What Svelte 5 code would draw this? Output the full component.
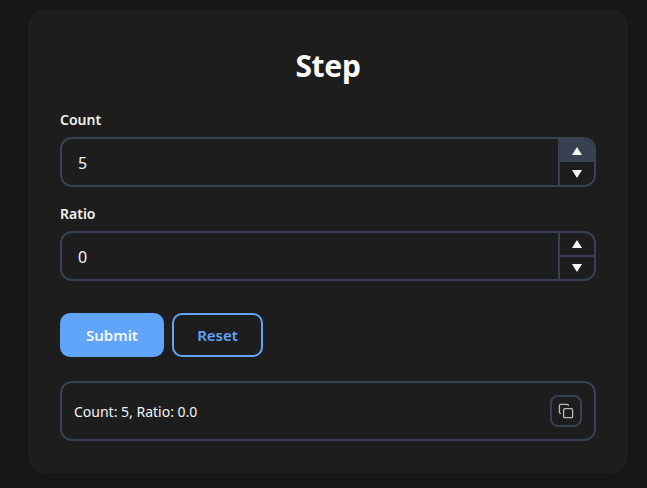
<script>
  let count = 5;
  let ratio = 0;

  const fields = [
    { label: 'Count', value: count, hot: true },
    { label: 'Ratio', value: ratio, hot: false }
  ];
</script>

<main class="page">
  <section class="card">
    <h1>Step</h1>

    {#each fields as field}
      <div class="field">
        <span class="label">{field.label}</span>
        <div class="number">
          <span class="value">{field.value}</span>
          <div class="spin">
            <button class="arrow" class:hot={field.hot} aria-label="Increment">
              <svg width="10" height="8" viewBox="0 0 10 8"><path d="M5 0 L10 8 H0 Z" /></svg>
            </button>
            <button class="arrow down" aria-label="Decrement">
              <svg width="10" height="8" viewBox="0 0 10 8"><path d="M0 0 H10 L5 8 Z" /></svg>
            </button>
          </div>
        </div>
      </div>
    {/each}

    <div class="actions">
      <button class="btn primary">Submit</button>
      <button class="btn secondary">Reset</button>
    </div>

    <div class="output">
      <span>Count: 5, Ratio: 0.0</span>
      <button class="copy" aria-label="Copy">
        <svg width="16" height="16" viewBox="0 0 16 16" fill="none" stroke="currentColor" stroke-width="1.3">
          <rect x="5.6" y="5.6" width="9" height="9" rx="1.2" />
          <path d="M3 10.4 H2.6 A1.2 1.2 0 0 1 1.4 9.2 V2.6 A1.2 1.2 0 0 1 2.6 1.4 H9.2 A1.2 1.2 0 0 1 10.4 2.6 V3" />
        </svg>
      </button>
    </div>
  </section>
</main>

<style>
  :global(body) {
    margin: 0;
    background: #161616;
  }

  .page {
    padding: 10px 19px 15px 28px;
    font-family: "Noto Sans", "Open Sans", sans-serif;
    color: #f4f4f5;
  }

  .card {
    box-sizing: border-box;
    width: 600px;
    height: 463px;
    padding: 32px;
    background: #1d1d1d;
    border-radius: 16px;
  }

  h1 {
    margin: 0 0 20px;
    height: 48px;
    line-height: 48px;
    font-size: 30px;
    font-weight: 700;
    text-align: center;
    color: #fff;
    letter-spacing: -0.3px;
  }

  .field {
    margin-bottom: 17px;
  }

  .label {
    display: block;
    height: 27px;
    line-height: 19px;
    font-size: 14px;
    font-weight: 600;
    color: #f0f0f0;
  }

  .number {
    box-sizing: border-box;
    display: flex;
    height: 50px;
    border: 2px solid #374151;
    border-radius: 12px;
    overflow: hidden;
  }

  .value {
    flex: 1;
    padding-left: 16px;
    line-height: 48px;
    font-size: 16px;
    color: #f4f4f5;
  }

  .spin {
    box-sizing: border-box;
    display: flex;
    flex-direction: column;
    width: 36px;
    border-left: 2px solid #374151;
  }

  .arrow {
    flex: 1;
    display: flex;
    align-items: center;
    justify-content: center;
    padding: 0;
    border: 0;
    background: none;
  }

  .arrow.hot {
    background: #374151;
  }

  .arrow.down {
    border-top: 2px solid #374151;
  }

  .arrow.hot + .arrow.down {
    border-top: 0;
  }

  .arrow svg {
    fill: #f8fafc;
  }

  .actions {
    display: flex;
    gap: 8px;
    margin-top: 32px;
  }

  .btn {
    box-sizing: border-box;
    height: 44px;
    border-radius: 10px;
    font-family: inherit;
    font-size: 15px;
    font-weight: 600;
  }

  .primary {
    width: 104px;
    border: 0;
    background: #60a5fa;
    color: #f4f8ff;
  }

  .secondary {
    width: 91px;
    border: 2px solid #60a5fa;
    background: none;
    color: #60a5fa;
  }

  .output {
    box-sizing: border-box;
    display: flex;
    align-items: center;
    justify-content: space-between;
    height: 60px;
    margin-top: 24px;
    padding: 0 12px;
    border: 2px solid #374151;
    border-radius: 12px;
    font-size: 14px;
    color: #f4f4f5;
  }

  .copy {
    box-sizing: border-box;
    display: flex;
    align-items: center;
    justify-content: center;
    width: 32px;
    height: 32px;
    padding: 0;
    border: 2px solid #374151;
    border-radius: 8px;
    background: none;
    color: #b6b9bf;
  }
</style>
